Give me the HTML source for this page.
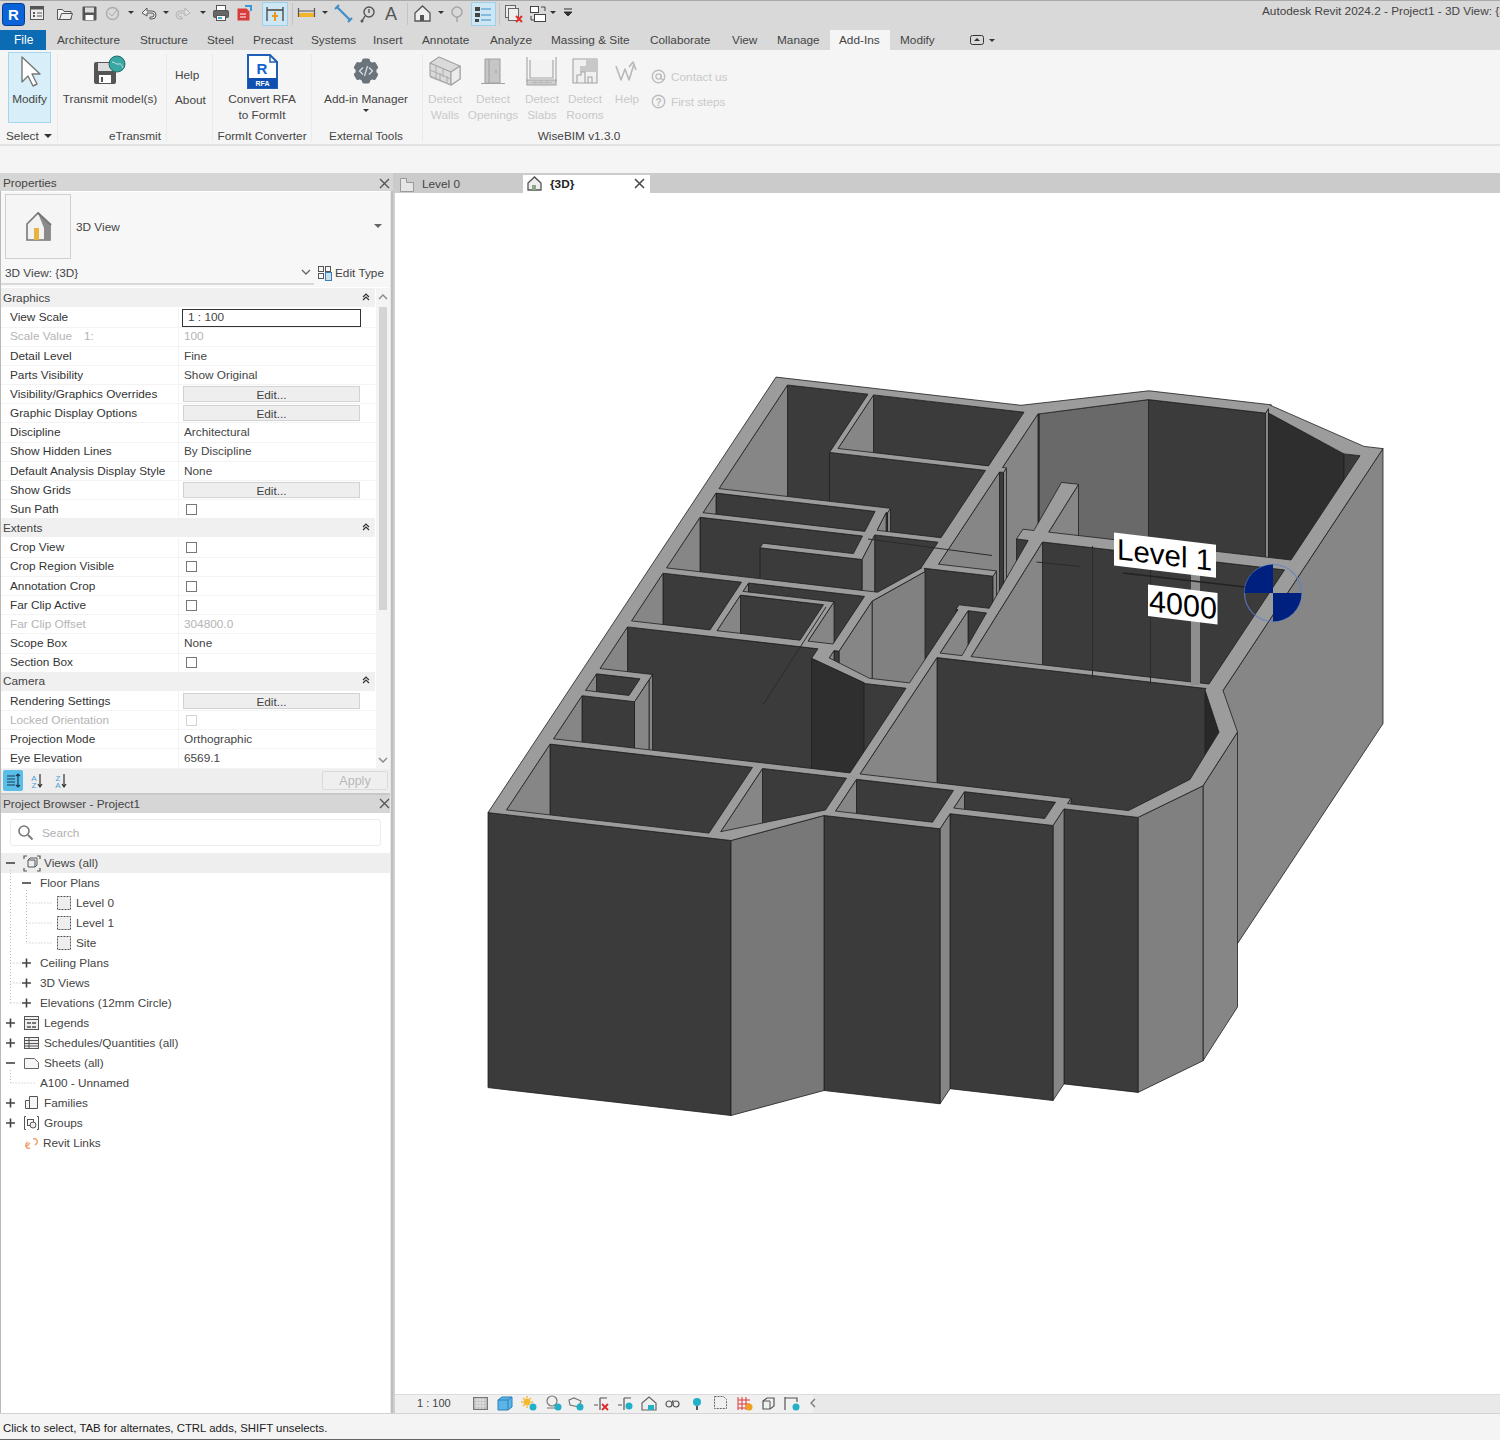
<!DOCTYPE html>
<html><head><meta charset="utf-8">
<style>
*{margin:0;padding:0;box-sizing:border-box}
html,body{width:1500px;height:1440px;overflow:hidden;background:#fff;font-family:"Liberation Sans",sans-serif;font-size:12px;color:#333}
.a{position:absolute;display:block}
.t{position:absolute;white-space:nowrap;line-height:14px}
</style></head><body>
<div class="a" style="left:0px;top:0px;width:1500px;height:50px;background:#d9d9d9"></div>
<div class="a" style="left:0px;top:0px;width:1500px;height:1px;background:#a9a9a9"></div>
<svg class="a" style="left:2px;top:3px" width="24" height="23" viewBox="0 0 24 23"><rect x="0.5" y="0.5" width="22" height="22" rx="3" fill="#0a63d8" stroke="#083f8a"/><text x="11.5" y="17" font-family="Liberation Sans" font-weight="bold" font-size="15" fill="#fff" text-anchor="middle">R</text></svg>
<svg class="a" style="left:0px;top:0px" width="600" height="28" viewBox="0 0 600 28">
<g transform="translate(30,6)"><rect x="0.5" y="0.5" width="13" height="13" fill="#eee" stroke="#555"/><rect x="0.5" y="0.5" width="13" height="3" fill="#555"/><rect x="3" y="6" width="2" height="2" fill="#555"/><rect x="3" y="9" width="2" height="2" fill="#555"/><path d="M7 7h5M7 10h5" stroke="#555"/></g>
<g transform="translate(57,6)"><path d="M0.5 3.5h5l1.5 2h7v8h-13.5z" fill="#f4f4f4" stroke="#555"/><path d="M2.5 13.5l2-6h11l-2 6z" fill="#eee" stroke="#555"/></g>
<g transform="translate(82,6)"><rect x="0.5" y="0.5" width="14" height="14" rx="1" fill="#555"/><rect x="3" y="1.5" width="9" height="5" fill="#ddd"/><rect x="3.5" y="9" width="8" height="5" fill="#fff"/></g>
<g transform="translate(105,6)" opacity="0.45"><circle cx="7.5" cy="7.5" r="6" fill="none" stroke="#777" stroke-width="1.5"/><path d="M4 7l3 3 5-6" stroke="#777" fill="none"/></g>
<path d="M128 11h6l-3 3z" fill="#333"/>
<g transform="translate(141,7)"><path d="M1 6l5-5v3h5a4 4 0 0 1 0 8h-2v-2h2a2 2 0 0 0 0-4h-5v3z" fill="#eee" stroke="#555"/></g>
<path d="M163 11h6l-3 3z" fill="#333"/>
<g transform="translate(176,7)" opacity="0.4"><path d="M14 6l-5-5v3h-5a4 4 0 0 0 0 8h2v-2h-2a2 2 0 0 1 0-4h5v3z" fill="#eee" stroke="#777"/></g>
<path d="M200 11h6l-3 3z" fill="#333"/>
<g transform="translate(213,5)"><rect x="3.5" y="0.5" width="9" height="5" fill="#fff" stroke="#555"/><rect x="0.5" y="5.5" width="15" height="7" rx="1" fill="#666" stroke="#555"/><rect x="3.5" y="10.5" width="9" height="5" fill="#fff" stroke="#555"/><rect x="5" y="12" width="4" height="2" fill="#4aa8d8"/></g>
<g transform="translate(237,5)"><path d="M0.5 3.5h9l3 3v9h-12z" fill="#d83b3b"/><path d="M3 9h6M3 12h6" stroke="#fff"/><path d="M8 1h6v5" stroke="#3a9ad8" stroke-width="2" fill="none"/></g>
<rect x="262.5" y="2.5" width="25" height="23" fill="#cce6f4" stroke="#9fcfea"/>
<g transform="translate(266,6)"><path d="M1 1v14M17 1v14M1 4h16" stroke="#444" stroke-width="1.3" fill="none"/><path d="M9 6v9M6 10h6" stroke="#e89a1a" stroke-width="2"/></g>
<path d="M292.5 3v22" stroke="#c4c4c4"/>
<g transform="translate(298,8)"><rect x="0" y="5" width="17" height="4" fill="#f0b52a"/><path d="M0.5 0v9M16.5 0v9M0 3h17" stroke="#555" stroke-width="1.2" fill="none"/></g>
<path d="M322 11h6l-3 3z" fill="#333"/>
<g transform="translate(335,5)"><path d="M2 2l13 13" stroke="#3f8fc8" stroke-width="2.2"/><path d="M0 4l4-4M13 17l4-4" stroke="#3f8fc8" stroke-width="2"/></g>
<g transform="translate(360,6)"><circle cx="9" cy="6" r="5" fill="none" stroke="#555" stroke-width="1.4"/><path d="M9 3v4" stroke="#555" stroke-width="1.4"/><path d="M5 10l-3 5" stroke="#555" stroke-width="1.4"/><circle cx="2" cy="15" r="1.5" fill="#555"/></g>
<text x="391" y="20" font-family="Liberation Sans" font-size="18" fill="#555" text-anchor="middle">A</text>
<path d="M407.5 3v22" stroke="#c4c4c4"/>
<g transform="translate(414,5)"><path d="M1 8l7.5-7 7.5 7v8h-15z" fill="#eee" stroke="#555" stroke-width="1.3"/><rect x="6" y="10" width="4" height="6" fill="#555"/></g>
<path d="M438 11h6l-3 3z" fill="#333"/>
<g transform="translate(450,6)" opacity="0.5"><circle cx="7" cy="6" r="5" fill="none" stroke="#777" stroke-width="1.5"/><path d="M7 11v5" stroke="#777" stroke-width="1.5"/></g>
<rect x="471.5" y="2.5" width="24" height="23" fill="#cce6f4" stroke="#9fcfea"/>
<g transform="translate(475,7)"><rect x="0" y="0" width="5" height="4" fill="#444"/><rect x="0" y="6" width="5" height="4" fill="#444"/><rect x="0" y="12" width="4" height="3" fill="#444"/><path d="M6 2h10M6 8h10M6 13h10" stroke="#3a8fc8" stroke-width="1.2"/></g>
<path d="M499.5 3v22" stroke="#c4c4c4"/>
<g transform="translate(505,5)"><rect x="0.5" y="0.5" width="10" height="12" fill="#eee" stroke="#666"/><rect x="3.5" y="3.5" width="10" height="12" fill="#eee" stroke="#666"/><path d="M11 11l6 6M17 11l-6 6" stroke="#e0302c" stroke-width="2"/></g>
<g transform="translate(530,6)"><rect x="0.5" y="0.5" width="8" height="6" fill="#fff" stroke="#444"/><rect x="4.5" y="8.5" width="11" height="7" fill="#fff" stroke="#444"/><path d="M11 1h4v4M1 10v4h3" stroke="#444" fill="none"/></g>
<path d="M550 11h6l-3 3z" fill="#333"/>
<path d="M564 9h8M564 12h8l-4 4z" stroke="#333" fill="#333"/>
</svg>
<div class="t" style="left:1262px;top:4px;font-size:11.8px;color:#444;">Autodesk Revit 2024.2 - Project1 - 3D View: {3D}</div>
<div class="a" style="left:0px;top:30px;width:46px;height:20px;background:#0b6bb3"></div>
<div class="t" style="left:14px;top:33px;font-size:12px;color:#fff;">File</div>
<div class="a" style="left:830px;top:30px;width:60px;height:20px;background:#f5f5f5"></div>
<div class="t" style="left:57px;top:33px;font-size:11.8px;color:#444;">Architecture</div>
<div class="t" style="left:140px;top:33px;font-size:11.8px;color:#444;">Structure</div>
<div class="t" style="left:207px;top:33px;font-size:11.8px;color:#444;">Steel</div>
<div class="t" style="left:253px;top:33px;font-size:11.8px;color:#444;">Precast</div>
<div class="t" style="left:311px;top:33px;font-size:11.8px;color:#444;">Systems</div>
<div class="t" style="left:373px;top:33px;font-size:11.8px;color:#444;">Insert</div>
<div class="t" style="left:422px;top:33px;font-size:11.8px;color:#444;">Annotate</div>
<div class="t" style="left:490px;top:33px;font-size:11.8px;color:#444;">Analyze</div>
<div class="t" style="left:551px;top:33px;font-size:11.8px;color:#444;">Massing &amp; Site</div>
<div class="t" style="left:650px;top:33px;font-size:11.8px;color:#444;">Collaborate</div>
<div class="t" style="left:732px;top:33px;font-size:11.8px;color:#444;">View</div>
<div class="t" style="left:777px;top:33px;font-size:11.8px;color:#444;">Manage</div>
<div class="t" style="left:839px;top:33px;font-size:11.8px;color:#444;">Add-Ins</div>
<div class="t" style="left:900px;top:33px;font-size:11.8px;color:#444;">Modify</div>
<svg class="a" style="left:966px;top:33px" width="32" height="14" viewBox="0 0 32 14"><rect x="4.5" y="2.5" width="13" height="9" rx="2" fill="none" stroke="#333"/><path d="M8 8l3-3 3 3z" fill="#333"/><path d="M23 6h6l-3 3z" fill="#333"/></svg>
<div class="a" style="left:0px;top:50px;width:1500px;height:95px;background:#f5f5f5"></div>
<div class="a" style="left:0px;top:144px;width:1500px;height:2px;background:#e2e2e2"></div>
<div class="a" style="left:57px;top:54px;width:1px;height:88px;background:#ebebeb"></div>
<div class="a" style="left:166px;top:54px;width:1px;height:88px;background:#ebebeb"></div>
<div class="a" style="left:212px;top:54px;width:1px;height:88px;background:#ebebeb"></div>
<div class="a" style="left:311px;top:54px;width:1px;height:88px;background:#ebebeb"></div>
<div class="a" style="left:422px;top:54px;width:1px;height:88px;background:#ebebeb"></div>
<div class="a" style="left:8px;top:52px;width:43px;height:71px;background:#d8eef9;border:1px solid #a6d6ee"></div>
<svg class="a" style="left:19px;top:55px" width="24" height="34" viewBox="0 0 24 34"><path d="M3 2v25l6-6 5 10 4-2-5-10h8z" fill="#fff" stroke="#777" stroke-width="1.4" stroke-linejoin="round"/></svg>
<div class="t" style="left:-70.5px;top:92px;width:200px;text-align:center;font-size:11.8px;color:#444;">Modify</div>
<div class="t" style="left:6px;top:129px;font-size:11.8px;color:#444;">Select</div>
<svg class="a" style="left:43px;top:133px" width="10" height="6" viewBox="0 0 10 6"><path d="M1 1h8l-4 4z" fill="#333"/></svg>
<svg class="a" style="left:93px;top:55px" width="34" height="32" viewBox="0 0 34 32"><rect x="1" y="7" width="22" height="22" rx="2" fill="#555"/><rect x="5" y="8" width="14" height="8" fill="#ddd"/><rect x="6" y="20" width="12" height="8" fill="#fff"/><rect x="8" y="22" width="2" height="5" fill="#555"/><circle cx="24" cy="9" r="8" fill="#3aa7a3" stroke="#1d6f6c"/><path d="M19 7c3 0 4 3 7 2s3 3 4 4" stroke="#cde" fill="none"/></svg>
<div class="t" style="left:10px;top:92px;width:200px;text-align:center;font-size:11.8px;color:#444;">Transmit model(s)</div>
<div class="t" style="left:175px;top:68px;font-size:11.8px;color:#444;">Help</div>
<div class="t" style="left:175px;top:93px;font-size:11.8px;color:#444;">About</div>
<div class="t" style="left:35px;top:129px;width:200px;text-align:center;font-size:11.8px;color:#444;">eTransmit</div>
<svg class="a" style="left:246px;top:54px" width="34" height="36" viewBox="0 0 34 36"><path d="M2 1h22l7 7v26h-29z" fill="#fff" stroke="#1f5fb8" stroke-width="2"/><path d="M24 1v7h7" fill="none" stroke="#1f5fb8" stroke-width="1.5"/><rect x="2" y="24" width="29" height="10" fill="#0f4fb0"/><text x="16" y="20" font-family="Liberation Sans" font-weight="bold" font-size="15" fill="#1464d0" text-anchor="middle">R</text><text x="16.5" y="32" font-family="Liberation Sans" font-weight="bold" font-size="7" fill="#fff" text-anchor="middle">RFA</text></svg>
<div class="t" style="left:162px;top:92px;width:200px;text-align:center;font-size:11.8px;color:#444;">Convert RFA</div>
<div class="t" style="left:162px;top:108px;width:200px;text-align:center;font-size:11.8px;color:#444;">to FormIt</div>
<div class="t" style="left:162px;top:129px;width:200px;text-align:center;font-size:11.8px;color:#444;">FormIt Converter</div>
<svg class="a" style="left:351px;top:57px" width="30" height="28" viewBox="0 0 30 28"><rect x="11" y="1.5" width="8" height="7" rx="2" fill="#6b737b" transform="rotate(0 15 14)"/><rect x="11" y="1.5" width="8" height="7" rx="2" fill="#6b737b" transform="rotate(60 15 14)"/><rect x="11" y="1.5" width="8" height="7" rx="2" fill="#6b737b" transform="rotate(120 15 14)"/><rect x="11" y="1.5" width="8" height="7" rx="2" fill="#6b737b" transform="rotate(180 15 14)"/><rect x="11" y="1.5" width="8" height="7" rx="2" fill="#6b737b" transform="rotate(240 15 14)"/><rect x="11" y="1.5" width="8" height="7" rx="2" fill="#6b737b" transform="rotate(300 15 14)"/><circle cx="15" cy="14" r="10.5" fill="#6b737b"/><path d="M12 10.5l-3.5 3.5 3.5 3.5M18 10.5l3.5 3.5-3.5 3.5M16.5 9l-3 10" stroke="#d8dde2" stroke-width="1.3" fill="none"/></svg>
<div class="t" style="left:266px;top:92px;width:200px;text-align:center;font-size:11.8px;color:#444;">Add-in Manager</div>
<svg class="a" style="left:362px;top:108px" width="8" height="5" viewBox="0 0 8 5"><path d="M1 1h6l-3 3z" fill="#333"/></svg>
<div class="t" style="left:266px;top:129px;width:200px;text-align:center;font-size:11.8px;color:#444;">External Tools</div>
<svg class="a" style="left:0px;top:0px" width="700" height="125" viewBox="0 0 700 125"><g stroke="#a3a3a3" stroke-width="1.1" stroke-linejoin="round">
<path d="M430 63l9-6 21 9v13l-9 6-21-9z" fill="#dadada"/><path d="M430 63l21 9 9-6M451 72v13" fill="none"/><path d="M430 70l21 9M430 77l21 8M436 66v8M443 69v8M440 73v8M447 76v8M436 80v-7" fill="none" stroke="#b0b0b0"/><path d="M451 72l9-6v13l-9 6z" fill="#ececec"/>
<rect x="485" y="59" width="15" height="24" fill="#c6c6c6"/><path d="M481 83.5h24M489 59v24M496 70v3" fill="none"/>
<path d="M527 57v24h29v-24" fill="none"/><path d="M530 60v18h23v-18" fill="#f2f2f2"/><path d="M527 80h29v5h-29z" fill="#d0d0d0"/><path d="M531 82.5h21M535 80v5M541 80v5M547 80v5" stroke="#b8b8b8" fill="none"/>
<rect x="573" y="59" width="24" height="24" fill="#f0f0f0"/><path d="M586 59v7h-6v6h17v-13z" fill="#c8c8c8" stroke="none"/><path d="M577 83v-8h4v-3h4v11M588 83v-6h4v6" fill="none"/>
<path d="M616 66l5 14 4-11 4 11 5-16M629 67l4-5 3 8" fill="none" stroke="#b8b8b8" stroke-width="1.6"/>
</g></svg>
<div class="t" style="left:345px;top:92px;width:200px;text-align:center;font-size:11.8px;color:#c9c9c9;">Detect</div>
<div class="t" style="left:345px;top:108px;width:200px;text-align:center;font-size:11.8px;color:#c9c9c9;">Walls</div>
<div class="t" style="left:393px;top:92px;width:200px;text-align:center;font-size:11.8px;color:#c9c9c9;">Detect</div>
<div class="t" style="left:393px;top:108px;width:200px;text-align:center;font-size:11.8px;color:#c9c9c9;">Openings</div>
<div class="t" style="left:442px;top:92px;width:200px;text-align:center;font-size:11.8px;color:#c9c9c9;">Detect</div>
<div class="t" style="left:442px;top:108px;width:200px;text-align:center;font-size:11.8px;color:#c9c9c9;">Slabs</div>
<div class="t" style="left:485px;top:92px;width:200px;text-align:center;font-size:11.8px;color:#c9c9c9;">Detect</div>
<div class="t" style="left:485px;top:108px;width:200px;text-align:center;font-size:11.8px;color:#c9c9c9;">Rooms</div>
<div class="t" style="left:527px;top:92px;width:200px;text-align:center;font-size:11.8px;color:#c9c9c9;">Help</div>
<svg class="a" style="left:651px;top:69px" width="16" height="40" viewBox="0 0 16 40"><circle cx="7.5" cy="7.5" r="6.2" fill="none" stroke="#bdbdbd" stroke-width="1.4"/><circle cx="7.5" cy="7.5" r="2.6" fill="none" stroke="#bdbdbd" stroke-width="1.3"/><path d="M10 5v4a2 2 0 0 0 3.5 1" fill="none" stroke="#bdbdbd" stroke-width="1.3"/><circle cx="7.5" cy="32.5" r="6.2" fill="none" stroke="#bdbdbd" stroke-width="1.4"/><text x="7.5" y="36.5" font-family="Liberation Sans" font-weight="bold" font-size="10" fill="#bdbdbd" text-anchor="middle">?</text></svg>
<div class="t" style="left:671px;top:70px;font-size:11.8px;color:#c9c9c9;">Contact us</div>
<div class="t" style="left:671px;top:95px;font-size:11.8px;color:#c9c9c9;">First steps</div>
<div class="t" style="left:479px;top:129px;width:200px;text-align:center;font-size:11.8px;color:#444;">WiseBIM v1.3.0</div>
<div class="a" style="left:0px;top:146px;width:1500px;height:27px;background:#f5f5f5"></div>
<div class="a" style="left:0px;top:173px;width:1500px;height:20px;background:#cbcbcb"></div>
<div class="a" style="left:0px;top:173px;width:393px;height:18px;background:#d6d6d6"></div>
<div class="t" style="left:3px;top:176px;font-size:11.8px;color:#444;">Properties</div>
<svg class="a" style="left:378px;top:177px" width="13" height="13" viewBox="0 0 13 13"><path d="M2 2l9 9M11 2l-9 9" stroke="#555" stroke-width="1.4"/></svg>
<div class="a" style="left:0px;top:191px;width:393px;height:1222px;background:#fff"></div>
<div class="a" style="left:0px;top:191px;width:1px;height:1222px;background:#b9b9b9"></div>
<div class="a" style="left:390px;top:191px;width:1px;height:1222px;background:#e6e6e6"></div>
<div class="a" style="left:391px;top:191px;width:2px;height:1222px;background:#bdbdbd"></div>
<div class="a" style="left:1px;top:192px;width:389px;height:95px;background:#f7f7f7"></div>
<div class="a" style="left:5px;top:194px;width:66px;height:65px;background:#f5f5f5;border:1px solid #cfcfcf"></div>
<svg class="a" style="left:22px;top:210px" width="34" height="34" viewBox="0 0 34 34"><path d="M5 14l11-11 12 12v15h-23z" fill="#f2f2f2" stroke="#777" stroke-width="1.6"/><path d="M16 3l12 12v15l-6 0v-12z" fill="#8a8a8a"/><path d="M16 3l13 12" stroke="#777" stroke-width="2"/><rect x="12" y="18" width="5" height="12" fill="#e8b340"/></svg>
<div class="t" style="left:76px;top:220px;font-size:11.8px;color:#444;">3D View</div>
<svg class="a" style="left:373px;top:223px" width="10" height="6" viewBox="0 0 10 6"><path d="M1 1h8l-4 4z" fill="#666"/></svg>
<div class="t" style="left:5px;top:266px;font-size:11.8px;color:#444;">3D View: {3D}</div>
<svg class="a" style="left:301px;top:269px" width="10" height="7" viewBox="0 0 10 7"><path d="M1 1l4 4 4-4" stroke="#666" fill="none" stroke-width="1.3"/></svg>
<svg class="a" style="left:317px;top:265px" width="16" height="16" viewBox="0 0 16 16"><rect x="1.5" y="1.5" width="5" height="5" fill="none" stroke="#555"/><rect x="8.5" y="1.5" width="5" height="5" fill="none" stroke="#555"/><rect x="1.5" y="8.5" width="5" height="5" fill="none" stroke="#555"/><rect x="8.5" y="7.5" width="6" height="8" fill="#cde" stroke="#3a7fb8"/></svg>
<div class="t" style="left:335px;top:266px;font-size:11.8px;color:#444;">Edit Type</div>
<div class="a" style="left:1px;top:283px;width:313px;height:2px;background:#d9d9d9"></div>
<div class="a" style="left:376px;top:288px;width:14px;height:481px;background:#f4f4f4"></div>
<div class="a" style="left:379px;top:307px;width:8px;height:303px;background:#d4d4d4"></div>
<svg class="a" style="left:376px;top:291px" width="14" height="12" viewBox="0 0 14 12"><path d="M3 8l4-4 4 4" stroke="#888" fill="none" stroke-width="1.4"/></svg>
<svg class="a" style="left:376px;top:754px" width="14" height="12" viewBox="0 0 14 12"><path d="M3 4l4 4 4-4" stroke="#888" fill="none" stroke-width="1.4"/></svg>
<div class="a" style="left:1px;top:288.4px;width:374px;height:19px;background:#f0f0f0"></div>
<div class="t" style="left:3px;top:291.0px;font-size:11.8px;color:#444;">Graphics</div>
<svg class="a" style="left:361px;top:292.0px" width="10" height="10" viewBox="0 0 10 10"><path d="M2 5l3-3 3 3M2 8l3-3 3 3" stroke="#333" fill="none" stroke-width="1.2"/></svg>
<div class="a" style="left:1px;top:326.6px;width:374px;height:1px;background:#f3f3f3"></div>
<div class="a" style="left:178px;top:307.6px;width:1px;height:19px;background:#f3f3f3"></div>
<div class="t" style="left:10px;top:310.2px;font-size:11.8px;color:#333;">View Scale</div>
<div class="a" style="left:182px;top:308.6px;width:179px;height:18px;background:#fff;border:1.5px solid #333"></div>
<div class="t" style="left:188px;top:310.2px;font-size:11.8px;color:#444;">1 : 100</div>
<div class="a" style="left:1px;top:345.7px;width:374px;height:1px;background:#f3f3f3"></div>
<div class="a" style="left:178px;top:326.7px;width:1px;height:19px;background:#f3f3f3"></div>
<div class="t" style="left:10px;top:329.3px;font-size:11.8px;color:#b4b4b4;">Scale Value</div>
<div class="t" style="left:84px;top:329.3px;font-size:11.8px;color:#b4b4b4;">1:</div>
<div class="t" style="left:184px;top:329.3px;font-size:11.8px;color:#b4b4b4;">100</div>
<div class="a" style="left:1px;top:364.9px;width:374px;height:1px;background:#f3f3f3"></div>
<div class="a" style="left:178px;top:345.9px;width:1px;height:19px;background:#f3f3f3"></div>
<div class="t" style="left:10px;top:348.5px;font-size:11.8px;color:#333;">Detail Level</div>
<div class="t" style="left:184px;top:348.5px;font-size:11.8px;color:#444;">Fine</div>
<div class="a" style="left:1px;top:384.1px;width:374px;height:1px;background:#f3f3f3"></div>
<div class="a" style="left:178px;top:365.1px;width:1px;height:19px;background:#f3f3f3"></div>
<div class="t" style="left:10px;top:367.7px;font-size:11.8px;color:#333;">Parts Visibility</div>
<div class="t" style="left:184px;top:367.7px;font-size:11.8px;color:#444;">Show Original</div>
<div class="a" style="left:1px;top:403.2px;width:374px;height:1px;background:#f3f3f3"></div>
<div class="a" style="left:178px;top:384.2px;width:1px;height:19px;background:#f3f3f3"></div>
<div class="t" style="left:10px;top:386.9px;font-size:11.8px;color:#333;">Visibility/Graphics Overrides</div>
<div class="a" style="left:183px;top:386.2px;width:177px;height:16px;background:#eeeeee;border:1px solid #d2d2d2"></div>
<div class="t" style="left:171.5px;top:387.9px;width:200px;text-align:center;font-size:11.8px;color:#444;">Edit...</div>
<div class="a" style="left:1px;top:422.4px;width:374px;height:1px;background:#f3f3f3"></div>
<div class="a" style="left:178px;top:403.4px;width:1px;height:19px;background:#f3f3f3"></div>
<div class="t" style="left:10px;top:406.0px;font-size:11.8px;color:#333;">Graphic Display Options</div>
<div class="a" style="left:183px;top:405.4px;width:177px;height:16px;background:#eeeeee;border:1px solid #d2d2d2"></div>
<div class="t" style="left:171.5px;top:407.0px;width:200px;text-align:center;font-size:11.8px;color:#444;">Edit...</div>
<div class="a" style="left:1px;top:441.6px;width:374px;height:1px;background:#f3f3f3"></div>
<div class="a" style="left:178px;top:422.6px;width:1px;height:19px;background:#f3f3f3"></div>
<div class="t" style="left:10px;top:425.2px;font-size:11.8px;color:#333;">Discipline</div>
<div class="t" style="left:184px;top:425.2px;font-size:11.8px;color:#444;">Architectural</div>
<div class="a" style="left:1px;top:460.8px;width:374px;height:1px;background:#f3f3f3"></div>
<div class="a" style="left:178px;top:441.8px;width:1px;height:19px;background:#f3f3f3"></div>
<div class="t" style="left:10px;top:444.4px;font-size:11.8px;color:#333;">Show Hidden Lines</div>
<div class="t" style="left:184px;top:444.4px;font-size:11.8px;color:#444;">By Discipline</div>
<div class="a" style="left:1px;top:479.9px;width:374px;height:1px;background:#f3f3f3"></div>
<div class="a" style="left:178px;top:460.9px;width:1px;height:19px;background:#f3f3f3"></div>
<div class="t" style="left:10px;top:463.5px;font-size:11.8px;color:#333;">Default Analysis Display Style</div>
<div class="t" style="left:184px;top:463.5px;font-size:11.8px;color:#444;">None</div>
<div class="a" style="left:1px;top:499.1px;width:374px;height:1px;background:#f3f3f3"></div>
<div class="a" style="left:178px;top:480.1px;width:1px;height:19px;background:#f3f3f3"></div>
<div class="t" style="left:10px;top:482.7px;font-size:11.8px;color:#333;">Show Grids</div>
<div class="a" style="left:183px;top:482.1px;width:177px;height:16px;background:#eeeeee;border:1px solid #d2d2d2"></div>
<div class="t" style="left:171.5px;top:483.7px;width:200px;text-align:center;font-size:11.8px;color:#444;">Edit...</div>
<div class="a" style="left:1px;top:518.3px;width:374px;height:1px;background:#f3f3f3"></div>
<div class="a" style="left:178px;top:499.3px;width:1px;height:19px;background:#f3f3f3"></div>
<div class="t" style="left:10px;top:501.9px;font-size:11.8px;color:#333;">Sun Path</div>
<div class="a" style="left:186px;top:503.9px;width:11px;height:11px;background:#fff;border:1px solid #777"></div>
<div class="a" style="left:1px;top:518.4px;width:374px;height:19px;background:#f0f0f0"></div>
<div class="t" style="left:3px;top:521.0px;font-size:11.8px;color:#444;">Extents</div>
<svg class="a" style="left:361px;top:522.0px" width="10" height="10" viewBox="0 0 10 10"><path d="M2 5l3-3 3 3M2 8l3-3 3 3" stroke="#333" fill="none" stroke-width="1.2"/></svg>
<div class="a" style="left:1px;top:556.6px;width:374px;height:1px;background:#f3f3f3"></div>
<div class="a" style="left:178px;top:537.6px;width:1px;height:19px;background:#f3f3f3"></div>
<div class="t" style="left:10px;top:540.2px;font-size:11.8px;color:#333;">Crop View</div>
<div class="a" style="left:186px;top:542.2px;width:11px;height:11px;background:#fff;border:1px solid #777"></div>
<div class="a" style="left:1px;top:575.8px;width:374px;height:1px;background:#f3f3f3"></div>
<div class="a" style="left:178px;top:556.8px;width:1px;height:19px;background:#f3f3f3"></div>
<div class="t" style="left:10px;top:559.4px;font-size:11.8px;color:#333;">Crop Region Visible</div>
<div class="a" style="left:186px;top:561.4px;width:11px;height:11px;background:#fff;border:1px solid #777"></div>
<div class="a" style="left:1px;top:594.9px;width:374px;height:1px;background:#f3f3f3"></div>
<div class="a" style="left:178px;top:575.9px;width:1px;height:19px;background:#f3f3f3"></div>
<div class="t" style="left:10px;top:578.5px;font-size:11.8px;color:#333;">Annotation Crop</div>
<div class="a" style="left:186px;top:580.5px;width:11px;height:11px;background:#fff;border:1px solid #777"></div>
<div class="a" style="left:1px;top:614.1px;width:374px;height:1px;background:#f3f3f3"></div>
<div class="a" style="left:178px;top:595.1px;width:1px;height:19px;background:#f3f3f3"></div>
<div class="t" style="left:10px;top:597.7px;font-size:11.8px;color:#333;">Far Clip Active</div>
<div class="a" style="left:186px;top:599.7px;width:11px;height:11px;background:#fff;border:1px solid #777"></div>
<div class="a" style="left:1px;top:633.3px;width:374px;height:1px;background:#f3f3f3"></div>
<div class="a" style="left:178px;top:614.3px;width:1px;height:19px;background:#f3f3f3"></div>
<div class="t" style="left:10px;top:616.9px;font-size:11.8px;color:#b4b4b4;">Far Clip Offset</div>
<div class="t" style="left:184px;top:616.9px;font-size:11.8px;color:#b4b4b4;">304800.0</div>
<div class="a" style="left:1px;top:652.5px;width:374px;height:1px;background:#f3f3f3"></div>
<div class="a" style="left:178px;top:633.5px;width:1px;height:19px;background:#f3f3f3"></div>
<div class="t" style="left:10px;top:636.1px;font-size:11.8px;color:#333;">Scope Box</div>
<div class="t" style="left:184px;top:636.1px;font-size:11.8px;color:#444;">None</div>
<div class="a" style="left:1px;top:671.6px;width:374px;height:1px;background:#f3f3f3"></div>
<div class="a" style="left:178px;top:652.6px;width:1px;height:19px;background:#f3f3f3"></div>
<div class="t" style="left:10px;top:655.2px;font-size:11.8px;color:#333;">Section Box</div>
<div class="a" style="left:186px;top:657.2px;width:11px;height:11px;background:#fff;border:1px solid #777"></div>
<div class="a" style="left:1px;top:671.8px;width:374px;height:19px;background:#f0f0f0"></div>
<div class="t" style="left:3px;top:674.4px;font-size:11.8px;color:#444;">Camera</div>
<svg class="a" style="left:361px;top:675.4px" width="10" height="10" viewBox="0 0 10 10"><path d="M2 5l3-3 3 3M2 8l3-3 3 3" stroke="#333" fill="none" stroke-width="1.2"/></svg>
<div class="a" style="left:1px;top:710.0px;width:374px;height:1px;background:#f3f3f3"></div>
<div class="a" style="left:178px;top:691.0px;width:1px;height:19px;background:#f3f3f3"></div>
<div class="t" style="left:10px;top:693.6px;font-size:11.8px;color:#333;">Rendering Settings</div>
<div class="a" style="left:183px;top:693.0px;width:177px;height:16px;background:#eeeeee;border:1px solid #d2d2d2"></div>
<div class="t" style="left:171.5px;top:694.6px;width:200px;text-align:center;font-size:11.8px;color:#444;">Edit...</div>
<div class="a" style="left:1px;top:729.1px;width:374px;height:1px;background:#f3f3f3"></div>
<div class="a" style="left:178px;top:710.1px;width:1px;height:19px;background:#f3f3f3"></div>
<div class="t" style="left:10px;top:712.7px;font-size:11.8px;color:#b4b4b4;">Locked Orientation</div>
<div class="a" style="left:186px;top:714.7px;width:11px;height:11px;background:#fff;border:1px solid #d4d4d4"></div>
<div class="a" style="left:1px;top:748.3px;width:374px;height:1px;background:#f3f3f3"></div>
<div class="a" style="left:178px;top:729.3px;width:1px;height:19px;background:#f3f3f3"></div>
<div class="t" style="left:10px;top:731.9px;font-size:11.8px;color:#333;">Projection Mode</div>
<div class="t" style="left:184px;top:731.9px;font-size:11.8px;color:#444;">Orthographic</div>
<div class="a" style="left:1px;top:767.5px;width:374px;height:1px;background:#f3f3f3"></div>
<div class="a" style="left:178px;top:748.5px;width:1px;height:19px;background:#f3f3f3"></div>
<div class="t" style="left:10px;top:751.1px;font-size:11.8px;color:#333;">Eye Elevation</div>
<div class="t" style="left:184px;top:751.1px;font-size:11.8px;color:#444;">6569.1</div>
<div class="a" style="left:1px;top:769px;width:389px;height:24px;background:#eeeeee"></div>
<div class="a" style="left:3px;top:770px;width:20px;height:21px;background:#59bfe8;border-radius:2px"></div>
<svg class="a" style="left:3px;top:770px" width="70" height="21" viewBox="0 0 70 21"><path d="M4 6h8M4 9h8M4 12h8M4 15h8" stroke="#1a3a55" stroke-width="1.1"/><path d="M15 4v13M13 6l2-2 2 2M13 15l2 2 2-2" stroke="#1a3a55" stroke-width="1.2" fill="none"/><text x="31" y="11" font-family="Liberation Sans" font-size="8" fill="#4aa0d0" text-anchor="middle">A</text><text x="31" y="18" font-family="Liberation Sans" font-size="8" fill="#4aa0d0" text-anchor="middle">Z</text><path d="M37 4v12M35 14l2 3 2-3" stroke="#333" stroke-width="1.2" fill="none"/><text x="55" y="11" font-family="Liberation Sans" font-size="8" fill="#4aa0d0" text-anchor="middle">Z</text><text x="55" y="18" font-family="Liberation Sans" font-size="8" fill="#4aa0d0" text-anchor="middle">A</text><path d="M61 4v12M59 14l2 3 2-3" stroke="#333" stroke-width="1.2" fill="none"/></svg>
<div class="a" style="left:322px;top:771px;width:66px;height:19px;background:#efefef;border:1px solid #dadada;border-radius:2px"></div>
<div class="t" style="left:255px;top:774px;width:200px;text-align:center;font-size:12.5px;color:#b8b8b8;">Apply</div>
<div class="a" style="left:1px;top:793px;width:389px;height:2px;background:#c8c8c8"></div>
<div class="a" style="left:1px;top:795px;width:389px;height:18px;background:#d6d6d6"></div>
<div class="t" style="left:3px;top:797px;font-size:11.8px;color:#444;">Project Browser - Project1</div>
<svg class="a" style="left:378px;top:797px" width="13" height="13" viewBox="0 0 13 13"><path d="M2 2l9 9M11 2l-9 9" stroke="#555" stroke-width="1.4"/></svg>
<div class="a" style="left:10px;top:819px;width:371px;height:27px;background:#fff;border:1px solid #ececec;border-radius:3px"></div>
<svg class="a" style="left:17px;top:824px" width="18" height="18" viewBox="0 0 18 18"><circle cx="7" cy="7" r="5" fill="none" stroke="#777" stroke-width="1.6"/><path d="M11 11l4.5 4.5" stroke="#777" stroke-width="1.8"/></svg>
<div class="t" style="left:42px;top:826px;font-size:11.8px;color:#b0b0b0;">Search</div>
<div class="a" style="left:1px;top:853px;width:389px;height:20px;background:#eeeeee"></div>
<svg class="a" style="left:0px;top:860px" width="120" height="300" viewBox="0 0 120 300"><path d="M10.5 10v133M26.5 30v53" stroke="#bbb" stroke-dasharray="1 2" fill="none"/><path d="M26.5 43h25M26.5 63h25M26.5 83h25M10.5 103h10M10.5 123h10M10.5 143h10" stroke="#bbb" stroke-dasharray="1 2" fill="none"/><path d="M10.5 210v13h24" stroke="#bbb" stroke-dasharray="1 2" fill="none"/></svg>
<svg class="a" style="left:5px;top:858px" width="12" height="10" viewBox="0 0 12 10"><path d="M1 5h9" stroke="#444" stroke-width="1.6"/></svg>
<svg class="a" style="left:23px;top:855px" width="18" height="17" viewBox="0 0 18 17"><path d="M1 4v-3h3M14 1h3v3M17 13v3h-3M4 16h-3v-3" stroke="#555" fill="none" stroke-width="1.2"/><path d="M5 5h7v7h-7z" fill="#eee" stroke="#555"/><path d="M5 5l2-2h7v7l-2 2" fill="none" stroke="#555"/></svg>
<div class="t" style="left:44px;top:856px;font-size:11.8px;color:#444;">Views (all)</div>
<svg class="a" style="left:21px;top:878px" width="12" height="10" viewBox="0 0 12 10"><path d="M1 5h9" stroke="#444" stroke-width="1.6"/></svg>
<div class="t" style="left:40px;top:876px;font-size:11.8px;color:#444;">Floor Plans</div>
<svg class="a" style="left:56px;top:895px" width="17" height="16" viewBox="0 0 17 16"><rect x="1.5" y="1.5" width="13" height="13" fill="#eee" stroke="#555" stroke-dasharray="2 1"/></svg>
<div class="t" style="left:76px;top:896px;font-size:11.8px;color:#444;">Level 0</div>
<svg class="a" style="left:56px;top:915px" width="17" height="16" viewBox="0 0 17 16"><rect x="1.5" y="1.5" width="13" height="13" fill="#eee" stroke="#555" stroke-dasharray="2 1"/></svg>
<div class="t" style="left:76px;top:916px;font-size:11.8px;color:#444;">Level 1</div>
<svg class="a" style="left:56px;top:935px" width="17" height="16" viewBox="0 0 17 16"><rect x="1.5" y="1.5" width="13" height="13" fill="#eee" stroke="#555" stroke-dasharray="2 1"/></svg>
<div class="t" style="left:76px;top:936px;font-size:11.8px;color:#444;">Site</div>
<svg class="a" style="left:21px;top:958px" width="12" height="10" viewBox="0 0 12 10"><path d="M1 5h9M5.5 0.5v9" stroke="#444" stroke-width="1.6"/></svg>
<div class="t" style="left:40px;top:956px;font-size:11.8px;color:#444;">Ceiling Plans</div>
<svg class="a" style="left:21px;top:978px" width="12" height="10" viewBox="0 0 12 10"><path d="M1 5h9M5.5 0.5v9" stroke="#444" stroke-width="1.6"/></svg>
<div class="t" style="left:40px;top:976px;font-size:11.8px;color:#444;">3D Views</div>
<svg class="a" style="left:21px;top:998px" width="12" height="10" viewBox="0 0 12 10"><path d="M1 5h9M5.5 0.5v9" stroke="#444" stroke-width="1.6"/></svg>
<div class="t" style="left:40px;top:996px;font-size:11.8px;color:#444;">Elevations (12mm Circle)</div>
<svg class="a" style="left:5px;top:1018px" width="12" height="10" viewBox="0 0 12 10"><path d="M1 5h9M5.5 0.5v9" stroke="#444" stroke-width="1.6"/></svg>
<svg class="a" style="left:23px;top:1015px" width="17" height="16" viewBox="0 0 17 16"><rect x="1.5" y="1.5" width="14" height="13" fill="#eee" stroke="#555"/><path d="M1.5 4.5h14" stroke="#555"/><rect x="4" y="7" width="4" height="2" fill="#777"/><rect x="9" y="7" width="4" height="2" fill="#777"/><rect x="4" y="11" width="4" height="2" fill="#777"/><rect x="9" y="11" width="4" height="2" fill="#777"/></svg>
<div class="t" style="left:44px;top:1016px;font-size:11.8px;color:#444;">Legends</div>
<svg class="a" style="left:5px;top:1038px" width="12" height="10" viewBox="0 0 12 10"><path d="M1 5h9M5.5 0.5v9" stroke="#444" stroke-width="1.6"/></svg>
<svg class="a" style="left:23px;top:1035px" width="17" height="16" viewBox="0 0 17 16"><rect x="1.5" y="2.5" width="14" height="11" fill="#eee" stroke="#555"/><path d="M1.5 5.5h14M1.5 8.5h14M1.5 11h14M6 2.5v11" stroke="#555"/></svg>
<div class="t" style="left:44px;top:1036px;font-size:11.8px;color:#444;">Schedules/Quantities (all)</div>
<svg class="a" style="left:5px;top:1058px" width="12" height="10" viewBox="0 0 12 10"><path d="M1 5h9" stroke="#444" stroke-width="1.6"/></svg>
<svg class="a" style="left:23px;top:1055px" width="17" height="16" viewBox="0 0 17 16"><path d="M1.5 3.5h10l4 4v6h-14z" fill="#f6f6f6" stroke="#666"/></svg>
<div class="t" style="left:44px;top:1056px;font-size:11.8px;color:#444;">Sheets (all)</div>
<div class="t" style="left:40px;top:1076px;font-size:11.8px;color:#444;">A100 - Unnamed</div>
<svg class="a" style="left:5px;top:1098px" width="12" height="10" viewBox="0 0 12 10"><path d="M1 5h9M5.5 0.5v9" stroke="#444" stroke-width="1.6"/></svg>
<svg class="a" style="left:23px;top:1095px" width="17" height="16" viewBox="0 0 17 16"><path d="M2.5 13.5v-8h4v-4h8v12z" fill="#f6f6f6" stroke="#555"/><path d="M6.5 5.5v8" stroke="#555"/></svg>
<div class="t" style="left:44px;top:1096px;font-size:11.8px;color:#444;">Families</div>
<svg class="a" style="left:5px;top:1118px" width="12" height="10" viewBox="0 0 12 10"><path d="M1 5h9M5.5 0.5v9" stroke="#444" stroke-width="1.6"/></svg>
<svg class="a" style="left:23px;top:1115px" width="17" height="16" viewBox="0 0 17 16"><path d="M3 1.5h-1.5v13h1.5M14 1.5h1.5v13h-1.5" stroke="#555" fill="none"/><rect x="4.5" y="4.5" width="6" height="6" fill="none" stroke="#555"/><circle cx="10" cy="10" r="3" fill="#eee" stroke="#555"/></svg>
<div class="t" style="left:44px;top:1116px;font-size:11.8px;color:#444;">Groups</div>
<svg class="a" style="left:23px;top:1135px" width="17" height="16" viewBox="0 0 17 16"><path d="M3 12l4-4M7 13a3 3 0 0 1-4-4l2-2M10 4a3 3 0 0 1 4 4l-2 2" stroke="#f0a070" stroke-width="1.5" fill="none"/></svg>
<div class="t" style="left:43px;top:1136px;font-size:11.8px;color:#444;">Revit Links</div>
<div class="a" style="left:395px;top:175px;width:127px;height:18px;background:#cbcbcb"></div>
<svg class="a" style="left:399px;top:177px" width="16" height="15" viewBox="0 0 16 15"><path d="M1.5 1.5h6v4h7v9h-13z" fill="#e6e6e6" stroke="#999"/></svg>
<div class="t" style="left:422px;top:177px;font-size:11.8px;color:#444;">Level 0</div>
<div class="a" style="left:523px;top:175px;width:127px;height:18px;background:#fff"></div>
<svg class="a" style="left:526px;top:176px" width="17" height="15" viewBox="0 0 17 15"><path d="M2 7l6.5-6 6.5 6v7h-13z" fill="#eee" stroke="#555" stroke-width="1.3"/><rect x="6" y="9" width="4" height="5" fill="#8a8" /><path d="M8.5 1l6.5 6" stroke="#555"/></svg>
<div class="t" style="left:550px;top:177px;font-size:11.8px;color:#222;font-weight:bold">{3D}</div>
<svg class="a" style="left:633px;top:177px" width="14" height="14" viewBox="0 0 14 14"><path d="M2 2l9 9M11 2l-9 9" stroke="#444" stroke-width="1.5"/></svg>
<div class="a" style="left:393px;top:193px;width:1107px;height:1201px;background:#fff"></div>
<div class="a" style="left:393px;top:193px;width:2px;height:1220px;background:#cfcfcf"></div>
<svg class="a" style="left:0;top:0" width="1500" height="1440" stroke="#1e1e1e" stroke-width="0.8" stroke-linejoin="round"><path d="M787.5 385 L868 394.2 L868 669.2 L787.5 660 Z" fill="#3b3b3b"/>
<path d="M873.5 394.9 L1024 412.2 L1024 687.2 L873.5 669.9 Z" fill="#3b3b3b"/>
<path d="M1270.6 405.4 L1271 404.8 L1271 679.8 L1270.6 680.4 Z" fill="#868686"/>
<path d="M1148.5 399.6 L1265.5 413.1 L1265.5 688.1 L1148.5 674.6 Z" fill="#3b3b3b"/>
<path d="M1039 413.9 L1148.5 399.6 L1148.5 674.6 L1039 688.9 Z" fill="#696969"/>
<path d="M1265.5 413.1 L1268.5 408.6 L1268.5 683.6 L1265.5 688.1 Z" fill="#868686"/>
<path d="M1038 413.8 L1039 413.9 L1039 688.9 L1038 688.8 Z" fill="#3b3b3b"/>
<path d="M838 448.5 L873.5 394.9 L873.5 669.9 L838 723.5 Z" fill="#868686"/>
<path d="M1268.5 413 L1344 453.9 L1344 728.9 L1268.5 688 Z" fill="#2e2e2e"/>
<path d="M719 488.6 L787.5 385 L787.5 660 L719 763.5 Z" fill="#868686"/>
<path d="M1002.5 467.5 L1038 413.8 L1038 688.8 L1002.5 742.5 Z" fill="#868686"/>
<path d="M1344 453.9 L1360 455.7 L1360 730.7 L1344 728.9 Z" fill="#3b3b3b"/>
<path d="M829.5 452.4 L985.5 470.4 L985.5 745.4 L829.5 727.4 Z" fill="#3b3b3b"/>
<path d="M1003.5 472.4 L1006.5 467.9 L1006.5 742.9 L1003.5 747.5 Z" fill="#868686"/>
<path d="M999.5 472 L1003.5 472.4 L1003.5 747.5 L999.5 747 Z" fill="#3b3b3b"/>
<path d="M716 493.1 L875.1 511.4 L875.1 786.4 L716 768.1 Z" fill="#3b3b3b"/>
<path d="M703 512.7 L716 493.1 L716 768.1 L703 787.7 Z" fill="#868686"/>
<path d="M1048.7 532.1 L1078.5 484.3 L1078.5 759.3 L1048.7 807.1 Z" fill="#868686"/>
<path d="M887.5 512.8 L890.5 508.3 L890.5 783.3 L887.5 787.8 Z" fill="#868686"/>
<path d="M886.1 512.6 L887.5 512.8 L887.5 787.8 L886.1 787.6 Z" fill="#3b3b3b"/>
<path d="M938.5 564.2 L999.5 472 L999.5 747 L938.5 839.2 Z" fill="#868686"/>
<path d="M877 530.3 L886.1 512.6 L886.1 787.6 L877 805.3 Z" fill="#878787"/>
<path d="M700 517.3 L862.5 536 L862.5 811 L700 792.3 Z" fill="#3b3b3b"/>
<path d="M874.7 534.9 L938 542.2 L938 817.2 L874.7 809.9 Z" fill="#3b3b3b"/>
<path d="M1016.5 539 L1028.2 540.4 L1028.2 815.4 L1016.5 814 Z" fill="#3b3b3b"/>
<path d="M666.5 567.9 L700 517.3 L700 792.3 L666.5 842.9 Z" fill="#868686"/>
<path d="M862 559.5 L874.7 534.9 L874.7 809.9 L862 834.5 Z" fill="#878787"/>
<path d="M760 547.8 L862 559.5 L862 834.5 L760 822.8 Z" fill="#3b3b3b"/>
<path d="M1042.5 542 L1284.5 569.9 L1284.5 844.9 L1042.5 817 Z" fill="#3b3b3b"/>
<path d="M921 567.9 L921.6 568 L921.6 843 L921 842.9 Z" fill="#3c3c3c"/>
<path d="M1223 690.5 L1383 448.6 L1383 723.6 L1223 965.5 Z" fill="#868686"/>
<path d="M924.3 568.3 L993 576.2 L993 851.2 L924.3 843.3 Z" fill="#3b3b3b"/>
<path d="M993 576.2 L996.5 570.9 L996.5 845.9 L993 851.2 Z" fill="#868686"/>
<path d="M663 573.2 L741.5 582.2 L741.5 857.2 L663 848.2 Z" fill="#3b3b3b"/>
<path d="M872.1 601.1 L925 571.6 L925 846.6 L872.1 876.1 Z" fill="#818181"/>
<path d="M743 591.4 L748.5 583 L748.5 858 L743 866.4 Z" fill="#868686"/>
<path d="M748.5 583 L864.5 596.4 L864.5 871.4 L748.5 858 Z" fill="#3b3b3b"/>
<path d="M631.5 620.9 L663 573.2 L663 848.2 L631.5 895.9 Z" fill="#868686"/>
<path d="M968 610.7 L986.5 612.9 L986.5 887.9 L968 885.7 Z" fill="#3b3b3b"/>
<path d="M971 656.6 L1042.5 542 L1042.5 817 L971 931.6 Z" fill="#868686"/>
<path d="M740.5 595.1 L823.5 604.7 L823.5 879.7 L740.5 870.1 Z" fill="#3b3b3b"/>
<path d="M956 609.4 L958 609.6 L958 884.6 L956 884.4 Z" fill="#3b3b3b"/>
<path d="M717 630.7 L740.5 595.1 L740.5 870.1 L717 905.7 Z" fill="#868686"/>
<path d="M808 641.1 L834 601.8 L834 876.8 L808 916.1 Z" fill="#868686"/>
<path d="M839 651.2 L872.1 601.1 L872.1 876.1 L839 926.2 Z" fill="#868686"/>
<path d="M940 653.1 L968 610.7 L968 885.7 L940 928.1 Z" fill="#868686"/>
<path d="M627.5 626.9 L818 648.8 L818 923.8 L627.5 901.9 Z" fill="#3b3b3b"/>
<path d="M600 668.5 L627.5 626.9 L627.5 901.9 L600 943.5 Z" fill="#868686"/>
<path d="M834 650.6 L839 651.2 L839 926.2 L834 925.6 Z" fill="#3b3b3b"/>
<path d="M829.2 657.9 L834 650.6 L834 925.6 L829.2 932.9 Z" fill="#868686"/>
<path d="M811.7 658.3 L864.4 682.8 L864.4 957.8 L811.7 933.3 Z" fill="#2f2f2f"/>
<path d="M937 657.6 L1206 688.5 L1206 963.5 L937 932.6 Z" fill="#3b3b3b"/>
<path d="M596.5 673.8 L640 678.8 L640 953.8 L596.5 948.8 Z" fill="#3b3b3b"/>
<path d="M649 679.8 L652.5 674.5 L652.5 949.5 L649 954.8 Z" fill="#868686"/>
<path d="M585.5 690.4 L596.5 673.8 L596.5 948.8 L585.5 965.4 Z" fill="#868686"/>
<path d="M864 683.4 L906 688.2 L906 963.2 L864 958.4 Z" fill="#3b3b3b"/>
<path d="M634.5 701.7 L649 679.8 L649 954.8 L634.5 976.7 Z" fill="#868686"/>
<path d="M582 695.7 L634.5 701.7 L634.5 976.7 L582 970.7 Z" fill="#3b3b3b"/>
<path d="M1205 690 L1219 732.3 L1219 1007.3 L1205 965 Z" fill="#282828"/>
<path d="M860 774 L937 657.6 L937 932.6 L860 1049 Z" fill="#868686"/>
<path d="M553.5 738.8 L582 695.7 L582 970.7 L553.5 1013.8 Z" fill="#868686"/>
<path d="M550 744.1 L752.5 767.4 L752.5 1042.4 L550 1019.1 Z" fill="#3b3b3b"/>
<path d="M1203 785.8 L1237.5 732 L1237.5 1007 L1203 1060.8 Z" fill="#868686"/>
<path d="M762.5 768.5 L846.5 778.2 L846.5 1053.2 L762.5 1043.5 Z" fill="#3b3b3b"/>
<path d="M506.5 809.9 L550 744.1 L550 1019.1 L506.5 1084.8 Z" fill="#868686"/>
<path d="M856.5 779.3 L953.5 790.5 L953.5 1065.5 L856.5 1054.3 Z" fill="#3b3b3b"/>
<path d="M835.5 811.1 L856.5 779.3 L856.5 1054.3 L835.5 1086.1 Z" fill="#868686"/>
<path d="M964.5 791.7 L1055.5 802.2 L1055.5 1077.2 L964.5 1066.7 Z" fill="#3b3b3b"/>
<path d="M953.7 808.1 L964.5 791.7 L964.5 1066.7 L953.7 1083.1 Z" fill="#868686"/>
<path d="M720.7 831.7 L762.5 768.5 L762.5 1043.5 L720.7 1106.7 Z" fill="#868686"/>
<path d="M1067.5 803.6 L1071 798.3 L1071 1073.3 L1067.5 1078.6 Z" fill="#868686"/>
<path d="M1138 817.4 L1203 785.8 L1203 1060.8 L1138 1092.4 Z" fill="#808080"/>
<path d="M1064 808.9 L1138 817.4 L1138 1092.4 L1064 1083.9 Z" fill="#3b3b3b"/>
<path d="M1053 825.5 L1064 808.9 L1064 1083.9 L1053 1100.5 Z" fill="#868686"/>
<path d="M950 813.7 L1053 825.5 L1053 1100.5 L950 1088.7 Z" fill="#3b3b3b"/>
<path d="M940 828.8 L950 813.7 L950 1088.7 L940 1103.8 Z" fill="#868686"/>
<path d="M824 815.5 L940 828.8 L940 1103.8 L824 1090.5 Z" fill="#3b3b3b"/>
<path d="M488 812.6 L731 840.5 L731 1115.5 L488 1087.6 Z" fill="#3b3b3b"/>
<path d="M731 840.5 L824 815.5 L824 1090.5 L731 1115.5 Z" fill="#787878"/>
<path d="M488 812.6 L731 840.5 L824 815.5 L940 828.8 L950 813.7 L1053 825.5 L1064 808.9 L1138 817.4 L1203 785.8 L1237.5 732 L1223 690.5 L1383 448.6 L1364 446.4 L1270.6 405.4 L1271 404.8 L1149 390.8 L1021 405.3 L776 377.1Z M1038 413.8 L1039 413.9 L1148.5 399.6 L1265.5 413.1 L1268.5 408.6 L1268.5 413 L1344 453.9 L1360 455.7 L1291 560 L1048.7 532.1 L1078.5 484.3 L1061.5 482.4 L1033.9 530.5 L1023 529.2 L1016.5 539 L1028.2 540.4 L989.2 608.3 L959 604.8 L956 609.4 L958 609.6 L909.5 682.9 L869.5 678.3 L829.2 657.9 L834 650.6 L839 651.2 L872.1 601.1 L925 571.6 L924.3 568.3 L993 576.2 L996.5 570.9 L938.5 564.2 L999.5 472 L1003.5 472.4 L1006.5 467.9 L1002.5 467.5Z M873.5 394.9 L1024 412.2 L988.5 465.9 L838 448.5Z M829.5 452.4 L985.5 470.4 L941 537.7 L877 530.3 L886.1 512.6 L887.5 512.8 L890.5 508.3 L719 488.6 L787.5 385 L868 394.2Z M862 559.5 L874.7 534.9 L938 542.2 L921 567.9 L921.6 568 L877.6 592.2 L666.5 567.9 L700 517.3 L862.5 536 L853.4 553.6 L763 543.2 L760 547.8Z M748.5 583 L864.5 596.4 L833 644 L808 641.1 L834 601.8 L743 591.4Z M740.5 595.1 L823.5 604.7 L800 640.2 L717 630.7Z M940 653.1 L968 610.7 L986.5 612.9 L962 655.6Z M860 774 L937 657.6 L1206 688.5 L1205 690 L1219 732.3 L1190 779.4 L1128.5 810.6 L1067.5 803.6 L1071 798.3Z M964.5 791.7 L1055.5 802.2 L1044.7 818.5 L953.7 808.1Z M856.5 779.3 L953.5 790.5 L932.5 822.2 L835.5 811.1Z M864.8 531.4 L703 512.7 L716 493.1 L875.1 511.4Z M600 668.5 L627.5 626.9 L818 648.8 L811.7 658.3 L864.4 682.8 L864 683.4 L906 688.2 L850 772.9 L553.5 738.8 L582 695.7 L634.5 701.7 L649 679.8 L652.5 674.5Z M709 833.1 L506.5 809.9 L550 744.1 L752.5 767.4Z M585.5 690.4 L596.5 673.8 L640 678.8 L629 695.4Z M663 573.2 L741.5 582.2 L710 629.9 L631.5 620.9Z M762.5 768.5 L846.5 778.2 L825.5 809.9 L720.7 831.7Z M1209 684 L971 656.6 L1042.5 542 L1284.5 569.9Z" fill="#9c9c9c" fill-rule="evenodd"/></svg>
<svg class="a" style="left:0;top:0" width="1500" height="1440">
<path d="M763.5 704L826 607M868 539L992 555.5M1036.5 562L1080 566.5M1092.5 546V678M1150.5 553V685" stroke="#2a2a2a" stroke-width="1" fill="none"/>
<rect x="1191" y="575" width="9" height="110" fill="#8e8e8e" stroke="none"/>
<path d="M1123 573l122 14" stroke="#222" stroke-width="1.4" fill="none"/>
<g transform="matrix(1,0.122,0,1,0,0)">
<rect x="1114" y="396.5" width="102" height="33" fill="#fff" stroke="none"/>
<text x="1117" y="423" font-family="Liberation Sans" font-size="29.5" fill="#000" stroke="none">Level 1</text>
<rect x="1148" y="444.5" width="69.5" height="31.5" fill="#fff" stroke="none"/>
<text x="1149" y="471" font-family="Liberation Sans" font-size="30.5" fill="#000" stroke="none">4000</text>
</g>
<circle cx="1273" cy="593" r="28.5" fill="none" stroke="#5b7fc8" stroke-width="1.2" opacity="0.8"/>
<path d="M1273 593v-28.5a28.5 28.5 0 0 0 -28.5 28.5z" fill="#002080" stroke="none"/>
<path d="M1273 593v28.5a28.5 28.5 0 0 0 28.5 -28.5z" fill="#002080" stroke="none"/>
</svg>
<div class="a" style="left:395px;top:1394px;width:1105px;height:19px;background:#e9e9e9;border-top:1px solid #dcdcdc"></div>
<div class="a" style="left:395px;top:1394px;width:418px;height:19px;background:#f0f0f0;border-top:1px solid #dcdcdc"></div>
<div class="t" style="left:417px;top:1396px;font-size:11px;color:#444;">1 : 100</div>
<svg class="a" style="left:0;top:0" width="1500" height="1440">
<g transform="translate(473,1396)"><rect x="0.5" y="1.5" width="14" height="12" fill="#bbb" stroke="#777"/><path d="M2 4h11M2 7h11M2 10h11M4 2v11M7 2v11M10 2v11" stroke="#eee" stroke-width="0.8"/></g>
<g transform="translate(497,1396)"><path d="M1 4l4-3h10v10l-4 3h-10z" fill="#5ab4e6" stroke="#2f7fb8"/><path d="M1 4h10v10M11 4l4-3" stroke="#2f7fb8" fill="none"/></g>
<g transform="translate(520,1395)"><circle cx="7" cy="7" r="3.5" fill="#f4b830"/><path d="M7 1v2M7 11v2M1 7h2M11 7h2M3 3l1.5 1.5M11 3l-1.5 1.5M3 11l1.5-1.5" stroke="#f4b830" stroke-width="1.3"/><circle cx="13" cy="12" r="3.5" fill="#22b0c8"/></g>
<g transform="translate(545,1395)"><circle cx="7" cy="6" r="5" fill="none" stroke="#777" stroke-width="1.2"/><path d="M2 13h10" stroke="#777"/><circle cx="13" cy="12" r="3.5" fill="#22b0c8"/></g>
<g transform="translate(568,1395)"><path d="M1 5l5-2 7 3-2 6-9-2z" fill="none" stroke="#777" stroke-width="1.2"/><circle cx="12" cy="12" r="3.5" fill="#22b0c8"/></g>
<g transform="translate(593,1395)"><path d="M1 10h4M7 3v12M7 3h7" stroke="#555" stroke-width="1.2" fill="none"/><path d="M9 9l6 6M15 9l-6 6" stroke="#e02828" stroke-width="1.8"/></g>
<g transform="translate(617,1395)"><path d="M1 10h4M7 3v12M7 3h7" stroke="#555" stroke-width="1.2" fill="none"/><circle cx="12" cy="11" r="3.5" fill="#22b0c8"/></g>
<g transform="translate(641,1395)"><path d="M1 8l7-6 7 6v7h-14z" fill="#eee" stroke="#666" stroke-width="1.2"/><rect x="7" y="10" width="6" height="5" fill="#22b0c8"/></g>
<g transform="translate(665,1397)"><circle cx="4" cy="7" r="3" fill="none" stroke="#555" stroke-width="1.2"/><circle cx="11" cy="7" r="3" fill="none" stroke="#555" stroke-width="1.2"/><path d="M7 6l1-3" stroke="#555"/></g>
<g transform="translate(690,1395)"><circle cx="7" cy="7" r="4" fill="#22b0c8"/><rect x="6" y="11" width="2" height="4" fill="#555"/></g>
<g transform="translate(713,1395)"><path d="M1.5 1.5h9l3 3v9h-12z" fill="none" stroke="#666" stroke-dasharray="2 1"/></g>
<g transform="translate(737,1395)"><path d="M1 2v13M5 2v13M9 2v13M1 5h12M1 9h12M1 13h12" stroke="#d83838" stroke-width="1"/><circle cx="12" cy="12" r="3.5" fill="#f0a020"/></g>
<g transform="translate(761,1396)"><path d="M2 5l4-3h7v8l-4 3h-7z" fill="none" stroke="#555" stroke-width="1.2"/><path d="M2 5h7v8" stroke="#555" fill="none"/></g>
<g transform="translate(784,1395)"><path d="M1 2v13M1 3h12v4" stroke="#555" stroke-width="1.2" fill="none"/><circle cx="12" cy="12" r="3.5" fill="#22b0c8"/></g>
<path d="M815 1399l-4 4 4 4" stroke="#777" fill="none" stroke-width="1.3"/>
</svg>
<div class="a" style="left:0px;top:1413px;width:1500px;height:27px;background:#f4f4f4;border-top:1px solid #d2d2d2"></div>
<div class="a" style="left:0px;top:1439px;width:560px;height:1px;background:#666"></div>
<div class="t" style="left:3px;top:1421px;font-size:11.4px;color:#222;">Click to select, TAB for alternates, CTRL adds, SHIFT unselects.</div>
</body></html>
